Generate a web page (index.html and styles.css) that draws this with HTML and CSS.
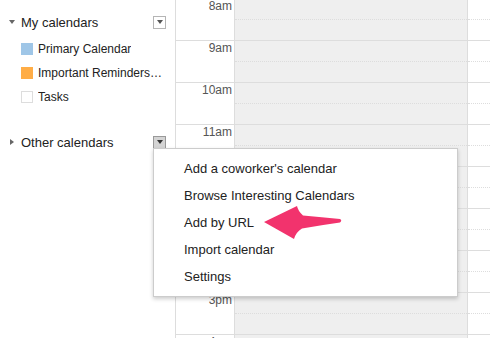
FILE: index.html
```html
<!DOCTYPE html>
<html lang="en">
<head>
  <meta charset="UTF-8" />
  <title>Calendar</title>
  <link rel="stylesheet" href="styles.css">
</head>
<body>
  <div class="page">
    <div class="sidebar">
      <div class="section-head">
        <span class="toggle down"></span>
        <span class="section-title">My calendars</span>
        <span class="menu-btn"></span>
      </div>
      <ul class="cal-list">
        <li><span class="swatch blue"></span><span class="cal-name">Primary Calendar</span></li>
        <li><span class="swatch orange"></span><span class="cal-name">Important Reminders for Work</span></li>
        <li><span class="swatch empty"></span><span class="cal-name">Tasks</span></li>
      </ul>
      <div class="section-head other">
        <span class="toggle right"></span>
        <span class="section-title">Other calendars</span>
        <span class="menu-btn active"></span>
      </div>
    </div>

    <div class="grid">
      <div class="hour"><div class="time">8am</div><div class="day"><div class="half"></div></div><div class="day next"><div class="half"></div></div></div>
      <div class="hour"><div class="time">9am</div><div class="day"><div class="half"></div></div><div class="day next"><div class="half"></div></div></div>
      <div class="hour"><div class="time">10am</div><div class="day"><div class="half"></div></div><div class="day next"><div class="half"></div></div></div>
      <div class="hour"><div class="time">11am</div><div class="day"><div class="half"></div></div><div class="day next"><div class="half"></div></div></div>
      <div class="hour"><div class="time">12pm</div><div class="day"><div class="half"></div></div><div class="day next"><div class="half"></div></div></div>
      <div class="hour"><div class="time">1pm</div><div class="day"><div class="half"></div></div><div class="day next"><div class="half"></div></div></div>
      <div class="hour"><div class="time">2pm</div><div class="day"><div class="half"></div></div><div class="day next"><div class="half"></div></div></div>
      <div class="hour"><div class="time">3pm</div><div class="day"><div class="half"></div></div><div class="day next"><div class="half"></div></div></div>
      <div class="hour"><div class="time">4pm</div><div class="day"><div class="half"></div></div><div class="day next"><div class="half"></div></div></div>
    </div>
  </div>

  <!-- dropdown for "Other calendars" -->
  <div class="dropdown">
    <div class="item">Add a coworker's calendar</div>
    <div class="item">Browse Interesting Calendars</div>
    <div class="item">Add by URL</div>
    <div class="item">Import calendar</div>
    <div class="item">Settings</div>
  </div>

  <svg class="pointer" width="90" height="45" viewBox="0 0 90 45">
    <path d="M4 22 L37 6 Q38 11 43 15.5 Q62 17 80 19 Q82.5 20.5 80 22.5 Q62 25 42 28.5 Q36 32 34 39 Z" fill="#f2336d"/>
  </svg>
</body>
</html>
```

FILE: styles.css
```css
body {
  margin: 0;
  font-family: "Liberation Sans", Arial, sans-serif;
  color: #222;
  background: #fff;
  overflow: hidden;
}

.page {
  display: flex;
  height: 338px;
  overflow: hidden;
}

.sidebar {
  width: 175px;
  flex: none;
  padding-top: 10px;
}

.section-head {
  display: flex;
  align-items: center;
  height: 24px;
  font-size: 13px;
}

.section-head.other {
  margin-top: 21px;
}

.toggle {
  width: 21px;
  display: flex;
  justify-content: center;
  padding-left: 3px;
  box-sizing: border-box;
}

.toggle.down::before {
  content: "";
  border-left: 3.5px solid transparent;
  border-right: 3.5px solid transparent;
  border-top: 4px solid #666;
}

.toggle.right::before {
  content: "";
  border-top: 3.5px solid transparent;
  border-bottom: 3.5px solid transparent;
  border-left: 4px solid #666;
}

.section-title {
  flex: 1;
}

.menu-btn {
  width: 11px;
  height: 11px;
  border: 1px solid #b5b5b5;
  background: #fff;
  margin-right: 9px;
  display: flex;
  align-items: center;
  justify-content: center;
}

.menu-btn::before {
  content: "";
  border-left: 3.5px solid transparent;
  border-right: 3.5px solid transparent;
  border-top: 4px solid #555;
}

.menu-btn.active {
  background: #d4d4d4;
  border-color: #999;
}

.menu-btn.active::before {
  border-top-color: #333;
}

.cal-list {
  list-style: none;
  margin: 3px 0 0;
  padding: 0;
}

.cal-list li {
  display: flex;
  align-items: center;
  height: 24px;
  padding-left: 21px;
  font-size: 12px;
}

.swatch {
  width: 12px;
  height: 12px;
  flex: none;
  margin-right: 5px;
  box-sizing: border-box;
}

.swatch.blue { background: #9fc6e7; }
.swatch.orange { background: #ffad46; }
.swatch.empty { border: 1px solid #ddd; }

.cal-name {
  max-width: 127px;
  white-space: nowrap;
  overflow: hidden;
  text-overflow: ellipsis;
}

.grid {
  flex: 1;
  min-width: 0;
  margin-top: -1px;
  border-left: 1px solid #ddd;
}

.hour {
  display: flex;
  height: 42px;
  box-sizing: border-box;
  border-bottom: 1px solid #ddd;
}

.time {
  width: 59px;
  flex: none;
  border-right: 1px solid #ddd;
  text-align: right;
  padding: 1px 2px 0 0;
  box-sizing: border-box;
  font-size: 12px;
  line-height: 12px;
  color: #555;
}

.day {
  width: 232px;
  flex: none;
  background: #efefef;
  border-right: 1px solid #ddd;
}

.day.next {
  flex: 1;
  min-width: 0;
  background: #fff;
  border-right: none;
}

.half {
  height: 20px;
  border-bottom: 1px dotted #ddd;
}

.dropdown {
  position: absolute;
  left: 153px;
  top: 148px;
  width: 305px;
  box-sizing: border-box;
  padding: 6px 0 6px;
  background: #fff;
  border: 1px solid #ccc;
  box-shadow: 0 2px 4px rgba(0, 0, 0, 0.2);
  font-size: 13px;
}

.dropdown .item {
  height: 27px;
  line-height: 27px;
  padding-left: 30px;
}

.pointer {
  position: absolute;
  left: 260px;
  top: 200px;
}
```
